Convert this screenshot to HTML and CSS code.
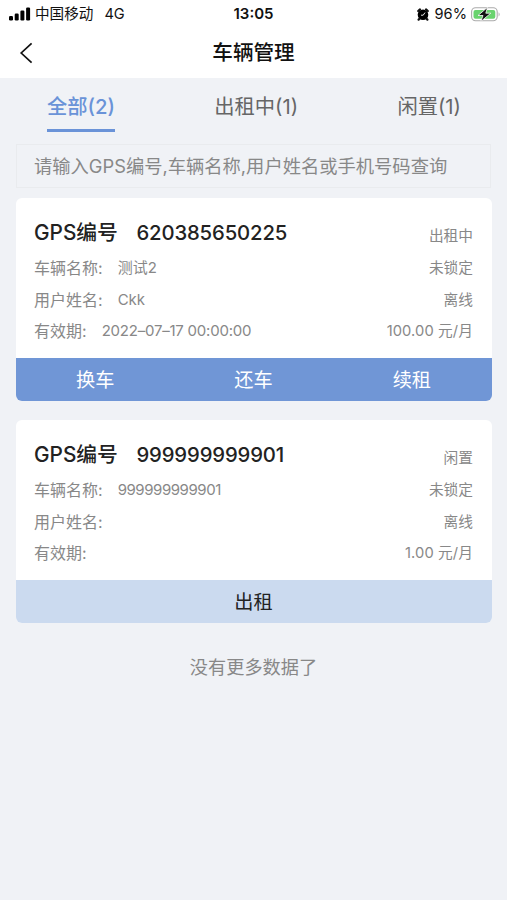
FILE: index.html
```html
<!DOCTYPE html>
<html lang="zh-CN">
<head>
<meta charset="utf-8">
<meta name="viewport" content="width=device-width, initial-scale=1">
<title>车辆管理</title>
<link rel="stylesheet" href="styles.css">
</head>
<body>
<header class="top">
  <div class="status">
    <div class="status-left">
      <svg class="signal" width="22" height="14" viewBox="0 0 22 14"><rect x="0" y="9" width="4" height="4.5" rx="1.2"/><rect x="5.7" y="6.5" width="4" height="7" rx="1.2"/><rect x="11.4" y="3.5" width="4" height="10" rx="1.2"/><rect x="17.1" y="0.5" width="4" height="13" rx="1.2"/></svg>
      <span class="carrier">中国移动</span>
      <span class="network">4G</span>
    </div>
    <span class="clock">13:05</span>
    <div class="status-right">
      <svg class="alarm" width="12" height="13" viewBox="0 0 12 13"><circle cx="6" cy="6.8" r="5.3"/><path d="M1.2 3 3 1.4M10.8 3 9 1.4M2.4 10.8 1.6 11.6M9.6 10.8l.8.8" stroke="#111" stroke-width="2.2" stroke-linecap="round"/><path d="M8 4.6 6.2 7.2H4" stroke="#fff" stroke-width=".9" fill="none"/></svg>
      <span class="percent">96%</span>
      <svg class="battery" width="30" height="15" viewBox="0 0 30 15"><rect x=".6" y=".8" width="25.6" height="13" rx="4" fill="#fff" stroke="#aaa" stroke-width="1.1"/><rect x="2.5" y="2.9" width="21.8" height="8.9" rx="2" fill="#69d36e"/><path d="M27.6 5.2q2 2.2 0 4.4z" fill="#aaa"/><path d="M16.6.3 7 8.5h5L9.8 14.5 19.8 6.2h-5z" fill="#111" stroke="#fff" stroke-width=".8"/></svg>
    </div>
  </div>
  <div class="nav">
    <svg class="back" width="14" height="22" viewBox="0 0 14 22"><path d="M12.6 1.3 2.2 11l10.4 9.7" fill="none" stroke="#111" stroke-width="1.7"/></svg>
    <h1 class="title">车辆管理</h1>
  </div>
</header>
<nav class="tabs">
  <a class="tab tab-active">全部(2)</a>
  <a class="tab">出租中(1)</a>
  <a class="tab">闲置(1)</a>
</nav>
<div class="search">请输入GPS编号,车辆名称,用户姓名或手机号码查询</div>
<main class="list">
  <section class="card">
    <div class="info">
      <div class="row row-head"><span class="name">GPS编号</span><span class="number">620385650225</span><span class="state">出租中</span></div>
      <div class="row"><span class="label">车辆名称:</span><span class="value">测试2</span><span class="state">未锁定</span></div>
      <div class="row"><span class="label">用户姓名:</span><span class="value">Ckk</span><span class="state">离线</span></div>
      <div class="row"><span class="label">有效期:</span><span class="value digits">2022–07–17 00:00:00</span><span class="state price">100.00 元/月</span></div>
    </div>
    <div class="actions"><span>换车</span><span>还车</span><span>续租</span></div>
  </section>
  <section class="card">
    <div class="info">
      <div class="row row-head"><span class="name">GPS编号</span><span class="number">999999999901</span><span class="state">闲置</span></div>
      <div class="row"><span class="label">车辆名称:</span><span class="value digits tight">999999999901</span><span class="state">未锁定</span></div>
      <div class="row"><span class="label">用户姓名:</span><span class="state">离线</span></div>
      <div class="row"><span class="label">有效期:</span><span class="state price">1.00 元/月</span></div>
    </div>
    <div class="actions actions-light"><span>出租</span></div>
  </section>
</main>
<p class="end">没有更多数据了</p>
</body>
</html>
```
FILE: styles.css
```css
* { box-sizing: border-box; }
body {
  margin: 0;
  min-height: 900px;
  background: #f0f2f6;
  color: #888;
  font-family: Inter, "Noto Sans CJK SC", sans-serif;
  white-space: nowrap;
}
.top { height: 78px; background: #fff; color: #111; }
.status {
  display: grid;
  grid-template-columns: 1fr auto 1fr;
  align-items: center;
  height: 28px;
  padding: 0 6px 0 9px;
  font-size: 14.6px;
  line-height: 28px;
}
.status-left, .status-right { display: flex; align-items: center; }
.status-right { justify-content: flex-end; }
.signal { margin-right: 4px; }
.network { margin-left: 11px; }
.clock { margin-right: 3px; font-weight: 600; font-size: 15px; }
.percent { margin: 0 4px 0 6px; }
.nav {
  display: grid;
  grid-template-columns: 1fr auto 1fr;
  align-items: center;
  height: 50px;
  padding: 0 19px;
}
.title { margin: 0; font-size: 20.6px; line-height: 50px; font-weight: 500; }
.tabs {
  display: flex;
  justify-content: space-between;
  height: 66px;
  padding: 0 46px 0 47px;
  font-size: 20.3px;
  line-height: 57px;
  color: #666;
}
.tab { height: 54px; }
.tab-active { color: #6a93d8; font-weight: 500; border-bottom: 3px solid #6a93d8; }
.search {
  height: 44px;
  margin: 0 16px;
  padding: 0 17px;
  border: 1px solid #e9ebee;
  font-size: 18.3px;
  line-height: 43px;
}
.list { display: flex; flex-direction: column; gap: 19px; margin: 10px 15px 0 16px; }
.card { border-radius: 6px; overflow: hidden; background: #fff; }
.info { height: 160px; padding: 16px 19px 0 18px; }
.row { display: flex; align-items: center; height: 31.7px; font-size: 16px; line-height: 32px; }
.row-head { height: 38px; line-height: 38px; }
.name, .number { font-size: 20.3px; font-weight: 500; color: #222; }
.name { font-size: 20.8px; }
.number { margin-left: 18.5px; letter-spacing: -0.13px; }
.value { margin-left: 15px; font-size: 15px; }
.digits { letter-spacing: -0.22px; }
.tight { letter-spacing: -0.45px; }
.state { margin-left: auto; font-size: 14.7px; }
.price { letter-spacing: 0.1px; }
.row-head .state { padding-top: 6px; }
.actions {
  display: grid;
  grid-auto-flow: column;
  grid-auto-columns: 1fr;
  height: 43px;
  padding-right: 1px;
  background: #7096d6;
  color: #fff;
  font-size: 19.2px;
  line-height: 45px;
  text-align: center;
}
.actions-light { background: #cbdaef; color: #222; }
.end { margin: 26px 0 0; font-size: 18.2px; line-height: 36px; text-align: center; }
```
